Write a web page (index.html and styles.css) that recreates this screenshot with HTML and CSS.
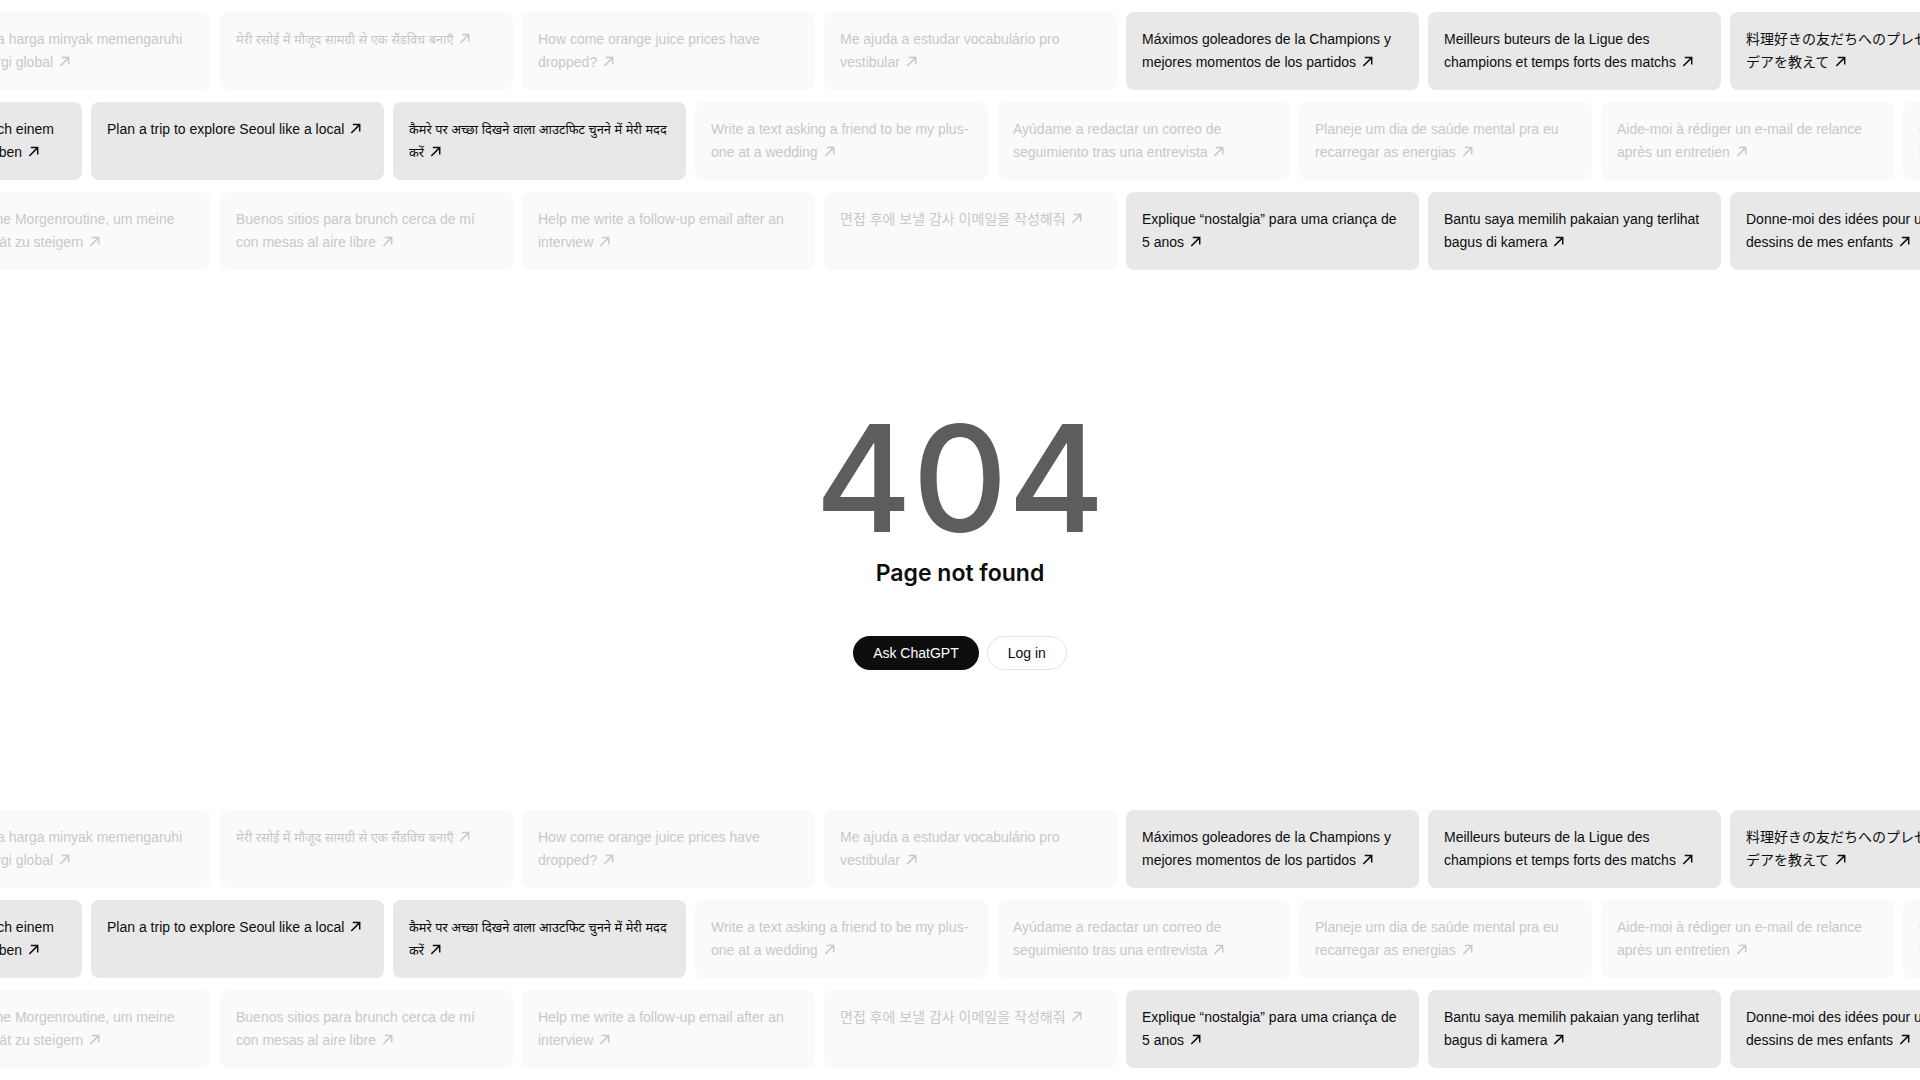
FILE: index.html
```html
<!DOCTYPE html>
<html lang="en">
<head>
    <meta charset="UTF-8">
    <meta name="viewport" content="width=device-width, initial-scale=1.0">
    <title>Page not found</title>
    <link rel="stylesheet" href="styles.css">
</head>
<body onload="renderPrompts()">
    <div class="prompts top" id="promptsTop"></div>

    <main class="notfound">
        <h1 class="code">404</h1>
        <h2 class="title">Page not found</h2>
        <div class="actions">
            <a class="btn btn-dark" href="#">Ask ChatGPT</a>
            <a class="btn btn-light" href="#">Log in</a>
        </div>
    </main>

    <div class="prompts bottom" id="promptsBottom"></div>

    <script>
        // each row: css shift class + list of [text, highlighted, lang]
        const rows = [
            {
                shift: 'shift-a',
                items: [
                    ['Bagaimana harga minyak memengaruhi pasar energi global', false, 'id'],
                    ['मेरी रसोई में मौजूद सामग्री से एक सैंडविच बनाएँ', false, 'hi'],
                    ['How come orange juice prices have dropped?', false, 'en'],
                    ['Me ajuda a estudar vocabulário pro vestibular', false, 'pt'],
                    ['Máximos goleadores de la Champions y mejores momentos de los partidos', true, 'es'],
                    ['Meilleurs buteurs de la Ligue des champions et temps forts des matchs', true, 'fr'],
                    ['料理好きの友だちへのプレゼントのアイデアを教えて', true, 'ja']
                ]
            },
            {
                shift: 'shift-b',
                items: [
                    ['Hilf mir, eine Dankes-E-Mail nach einem Vorstellungsgespräch zu schreiben', true, 'de'],
                    ['Plan a trip to explore Seoul like a local', true, 'en'],
                    ['कैमरे पर अच्छा दिखने वाला आउटफिट चुनने में मेरी मदद करें', true, 'hi'],
                    ['Write a text asking a friend to be my plus-one at a wedding', false, 'en'],
                    ['Ayúdame a redactar un correo de seguimiento tras una entrevista', false, 'es'],
                    ['Planeje um dia de saúde mental pra eu recarregar as energias', false, 'pt'],
                    ['Aide-moi à rédiger un e-mail de relance après un entretien', false, 'fr'],
                    ['Give me ideas for a relaxing weekend at home', false, 'en']
                ]
            },
            {
                shift: 'shift-a',
                items: [
                    ['Erstelle eine Morgenroutine, um meine Produktivität zu steigern', false, 'de'],
                    ['Buenos sitios para brunch cerca de mí con mesas al aire libre', false, 'es'],
                    ['Help me write a follow-up email after an interview', false, 'en'],
                    ['면접 후에 보낼 감사 이메일을 작성해줘', false, 'ko'],
                    ['Explique “nostalgia” para uma criança de 5 anos', true, 'pt'],
                    ['Bantu saya memilih pakaian yang terlihat bagus di kamera', true, 'id'],
                    ['Donne-moi des idées pour utiliser les dessins de mes enfants', true, 'fr']
                ]
            }
        ];

        const arrowSvg = '<svg class="arrow" viewBox="0 0 11 11" aria-hidden="true"><path d="M1.3 10 L9.4 1.9 M2.8 1.5 H9.7 V8.4"/></svg>';

        function buildRows(container) {
            rows.forEach(row => {
                const rowDiv = document.createElement('div');
                rowDiv.className = 'prompt-row ' + row.shift;

                row.items.forEach(([text, highlighted, lang]) => {
                    const card = document.createElement('a');
                    card.href = '#';
                    card.lang = lang;
                    card.className = highlighted ? 'prompt' : 'prompt faded';
                    card.textContent = text + '\u00a0';
                    card.insertAdjacentHTML('beforeend', arrowSvg);
                    rowDiv.appendChild(card);
                });

                container.appendChild(rowDiv);
            });
        }

        function renderPrompts() {
            buildRows(document.getElementById('promptsTop'));
            buildRows(document.getElementById('promptsBottom'));
        }
    </script>
</body>
</html>
```

FILE: styles.css
```css
body {
    font-family: "Liberation Sans", "Noto Sans Devanagari", "Noto Sans CJK JP", sans-serif;
    background-color: #fff;
    color: #0d0d0d;
    margin: 0;
    padding: 0;
    height: 100vh;
    overflow: hidden;
    display: flex;
    flex-direction: column;
}

/* prompt walls at the top and bottom */
.prompts {
    display: flex;
    flex-direction: column;
    gap: 12px;
    overflow: hidden;
}

.prompts.top {
    padding-top: 12px;
}

.prompts.bottom {
    padding-bottom: 12px;
}

.prompt-row {
    display: flex;
    gap: 9px;
}

.prompt-row.shift-a {
    margin-left: -82px;
}

.prompt-row.shift-b {
    margin-left: -211px;
}

.prompt {
    flex: 0 0 293px;
    height: 78px;
    box-sizing: border-box;
    padding: 16px;
    border-radius: 8px;
    background-color: #e8e8e8;
    color: #0d0d0d;
    font-size: 14px;
    line-height: 23px;
    text-decoration: none;
    overflow: hidden;
}

.prompt:lang(hi) {
    font-size: 12.8px; /* devanagari fallback runs a bit wide */
    padding-right: 8px;
}

.prompt:lang(ko) {
    font-family: "Liberation Sans", "Noto Sans CJK KR", sans-serif;
}

.prompt.faded {
    background-color: #fafafa;
    color: #c8c8c8;
}

.arrow {
    width: 11px;
    height: 11px;
    margin-left: 2px;
    fill: none;
    stroke: currentColor;
    stroke-width: 1.5;
}

/* center block */
.notfound {
    flex: 1;
    display: flex;
    flex-direction: column;
    align-items: center;
    justify-content: center;
    padding-bottom: 6px;
}

.code {
    font-family: Inter, "Liberation Sans", sans-serif;
    font-size: 148px;
    font-weight: 500;
    line-height: 1;
    color: #5d5d5d;
    margin: 0;
}

.title {
    font-family: Inter, "Liberation Sans", sans-serif;
    font-size: 23px;
    font-weight: 600;
    line-height: 28px;
    margin: 6px 0 0;
}

.actions {
    display: flex;
    gap: 8px;
    margin-top: 49px;
}

.btn {
    height: 34px;
    box-sizing: border-box;
    padding: 0 19px;
    border-radius: 999px;
    border: 1px solid transparent;
    font-size: 14px;
    display: flex;
    align-items: center;
    text-decoration: none;
}

.btn-dark {
    background-color: #0d0d0d;
    color: #fff;
}

.btn-light {
    background-color: #fff;
    border-color: #e3e3e3;
    color: #0d0d0d;
    padding: 0 20px;
}
```
